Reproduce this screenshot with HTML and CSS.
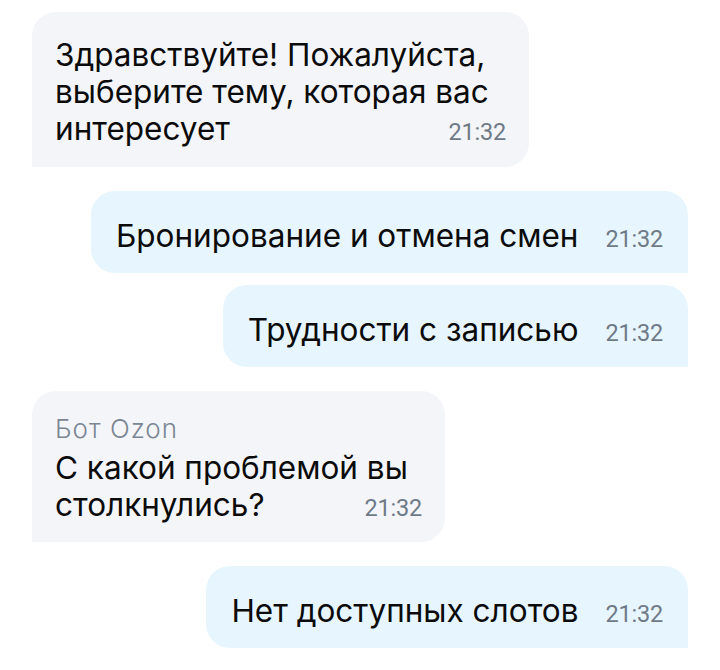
FILE: index.html
```html
<!DOCTYPE html>
<html lang="ru">
<head>
<meta charset="utf-8">
<title>Чат</title>
<link rel="stylesheet" href="styles.css">
</head>
<body>
<div class="chat">
  <div class="group group-in">
    <div class="bubble bubble-in bubble-greet">
      <div class="body-stack">
        <p class="text">Здравствуйте! Пожалуйста,<br>выберите тему, которая вас<br>интересует</p>
        <span class="time">21:32</span>
      </div>
    </div>
  </div>
  <div class="group group-out">
    <div class="bubble bubble-out">
      <div class="body">
        <p class="text">Бронирование и отмена смен</p>
        <span class="time">21:32</span>
      </div>
    </div>
    <div class="bubble bubble-out">
      <div class="body">
        <p class="text">Трудности с записью</p>
        <span class="time">21:32</span>
      </div>
    </div>
  </div>
  <div class="group group-in">
    <div class="bubble bubble-in bubble-named bubble-question">
      <div class="author">Бот Ozon</div>
      <div class="body-stack">
        <p class="text">С какой проблемой вы<br>столкнулись?</p>
        <span class="time">21:32</span>
      </div>
    </div>
  </div>
  <div class="group group-out">
    <div class="bubble bubble-out">
      <div class="body">
        <p class="text">Нет доступных слотов</p>
        <span class="time">21:32</span>
      </div>
    </div>
  </div>
</div>
</body>
</html>
```
FILE: styles.css
```css
html, body {
  margin: 0;
  background: #ffffff;
}
body {
  font-family: Inter, "Noto Sans", sans-serif;
  color: #0b0b0b;
}
.chat {
  display: flex;
  flex-direction: column;
  gap: 24px;
  padding: 12px 32px;
}
.group {
  display: flex;
  flex-direction: column;
  gap: 12px;
}
.group-in { align-items: flex-start; }
.group-out { align-items: flex-end; }

.bubble {
  box-sizing: border-box;
  padding: 26px 25px 19px;
  border-radius: 24px;
}
.bubble-in {
  background: #f4f5f9;
  border-bottom-left-radius: 0;
  padding: 24px 23px 20px;
}
.bubble-out {
  background: #e7f5fe;
  border-bottom-right-radius: 0;
}
.bubble-greet { width: 497px; }
.bubble-question { width: 413px; }
.bubble-named { padding-top: 18px; padding-bottom: 19px; }

.author {
  font-size: 26px;
  font-weight: 300;
  letter-spacing: 1px;
  line-height: 40px;
  color: #7b8693;
}
.body {
  display: flex;
  align-items: last baseline;
  gap: 27px;
}
.body-stack {
  display: grid;
  grid-template-areas: "cell";
  align-items: last baseline;
}
.body-stack > * { grid-area: cell; }
.body-stack > .time { justify-self: end; }

.text {
  margin: 0;
  font-size: 31.5px;
  line-height: 37px;
  white-space: nowrap;
}
.time {
  font-family: Roboto, "Noto Sans", sans-serif;
  font-size: 23.5px;
  line-height: 26px;
  letter-spacing: -0.2px;
  color: #6e7a87;
}
```
